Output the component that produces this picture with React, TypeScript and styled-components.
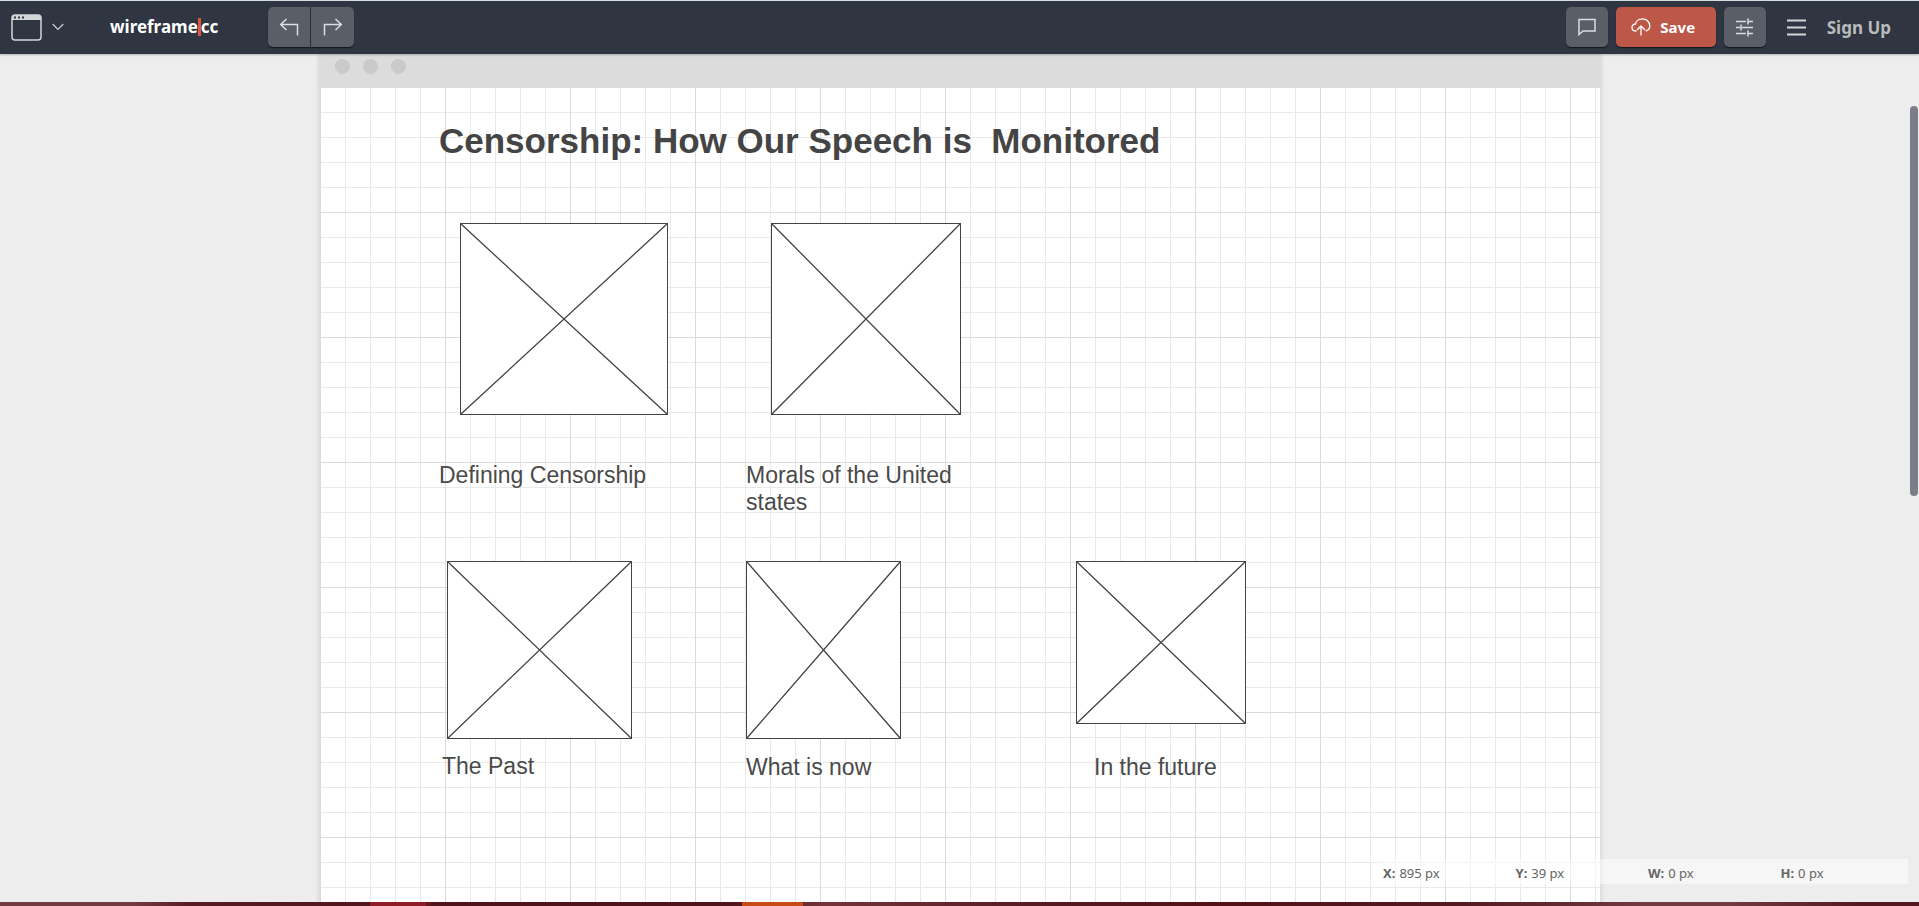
import React from 'react';
import styled, { createGlobalStyle } from 'styled-components';

const GlobalStyle = createGlobalStyle`
  * { box-sizing: border-box; }
  body {
    margin: 0;
    background: #ededed;
    font-family: "Noto Sans", "Open Sans", sans-serif;
  }
  button { font-family: inherit; }
`;

const Screen = styled.div`
  display: flex;
  flex-direction: column;
  height: 100vh;
  overflow: hidden;
`;

const Toolbar = styled.header`
  position: relative;
  z-index: 2;
  flex: none;
  display: flex;
  align-items: flex-start;
  justify-content: space-between;
  height: 54px;
  padding: 6px 28px 0 11px;
  border-top: 1px solid #d5dedf;
  background: #2f3541;
  box-shadow: 0 1px 2px rgba(0, 0, 0, 0.25);
`;

const Group = styled.div<{ $gap: number }>`
  display: flex;
  align-items: center;
  gap: ${(p) => p.$gap}px;
  height: 40px;
`;

const PlainButton = styled.button`
  display: flex;
  align-items: center;
  gap: 10px;
  padding: 0;
  border: 0;
  background: none;
  color: #d3d5d8;
`;

const Logo = styled.a`
  display: flex;
  align-items: center;
  width: 138px;
  color: #fff;
  font-size: 17px;
  font-weight: 700;
  line-height: 24px;
  text-decoration: none;
`;

const LogoBar = styled.span`
  width: 3px;
  height: 18px;
  background: #e2563f;
`;

const ToolButton = styled.button<{ $side?: 'left' | 'right'; $primary?: boolean }>`
  display: flex;
  align-items: center;
  justify-content: center;
  gap: 9px;
  width: ${(p) => (p.$primary ? 100 : p.$side === 'right' ? 43 : 42)}px;
  height: 40px;
  padding: ${(p) => (p.$primary ? '0 5px 0 0' : '0')};
  border: 0;
  border-radius: ${(p) =>
    p.$side === 'left' ? '5px 0 0 5px' : p.$side === 'right' ? '0 5px 5px 0' : '5px'};
  background: ${(p) => (p.$primary ? '#bd5848' : '#5a5e67')};
  box-shadow: 0 1px 1px #14171c;
  color: ${(p) => (p.$primary ? '#fff' : '#dcdde0')};
  font-size: 15px;
  font-weight: 700;
`;

const SignUp = styled.a`
  color: #b9babb;
  font-size: 17px;
  font-weight: 700;
  text-decoration: none;
`;

const Workspace = styled.main`
  position: relative;
  flex: 1;
  display: flex;
  justify-content: center;
  min-height: 0;
  padding-left: 1px;
  overflow: hidden;
`;

const Sheet = styled.section`
  flex: none;
  display: flex;
  flex-direction: column;
  width: 1282px;
  max-width: 100%;
  box-shadow: 0 0 4px rgba(0, 0, 0, 0.14);
`;

const SheetBar = styled.div`
  flex: none;
  display: flex;
  gap: 13px;
  height: 34px;
  padding: 5px 16px;
  background: #dcdcdc;
`;

const Dot = styled.span`
  width: 15px;
  height: 15px;
  border-radius: 50%;
  background: #cacaca;
`;

const Page = styled.div`
  position: relative;
  flex: 1;
  border: solid #dfdfdf;
  border-width: 0 1px;
  background-color: #fff;
  background-image:
    linear-gradient(to left, #dbdbdb 1px, transparent 1px),
    linear-gradient(to top, #dbdbdb 1px, transparent 1px),
    linear-gradient(to left, #e9e9e9 1px, transparent 1px),
    linear-gradient(to top, #e9e9e9 1px, transparent 1px);
  background-size: 125px 125px, 125px 125px, 25px 25px, 25px 25px;
  background-position: 1px 0;
`;

const Placed = styled.div<{ $x: number; $y: number }>`
  position: absolute;
  left: ${(p) => p.$x}px;
  top: ${(p) => p.$y}px;
`;

const Frame = styled.svg`
  display: block;
  background: #fff;
`;

const Heading = styled.h1`
  margin: 0;
  color: #444;
  font: 700 35px/42px "Liberation Sans", Arial, sans-serif;
  white-space: pre;
`;

const Label = styled.p`
  max-width: 230px;
  margin: 0;
  color: #4a4a4a;
  font: 400 23px/27px "Liberation Sans", Arial, sans-serif;
`;

const Scrollbar = styled.div`
  position: absolute;
  top: 52px;
  right: 1px;
  width: 8px;
  height: 390px;
  border-radius: 4px;
  background: #7b7e87;
`;

const Readout = styled.dl`
  position: absolute;
  right: 11px;
  bottom: 18px;
  display: grid;
  grid-template-columns: repeat(4, 1fr);
  width: 530px;
  height: 25px;
  margin: 0;
  background: rgba(255, 255, 255, 0.5);
  color: #666;
  font-size: 13px;
  line-height: 28px;
`;

const Measure = styled.div`
  display: flex;
  gap: 4px;
  padding-left: 5px;
  dt { font-weight: 700; }
  dd { margin: 0; }
`;

const Taskbar = styled.footer`
  flex: none;
  display: flex;
  height: 4px;
  background: linear-gradient(90deg, #733a40 0%, #733a40 7%, #581a22 10%, #4f1319 24%, #4f1319 38%, #733338 43%, #571a22 54%, #521216 63%, #531820 76%, #733a40 86%, #733a40 90%, #531820 97%);
`;

const Task = styled.span<{ $start: number; $width: number; $color: string }>`
  width: ${(p) => p.$width}px;
  margin-left: ${(p) => p.$start}px;
  background: ${(p) => p.$color};
`;

const boxes = [
  { x: 140, y: 135, w: 208, h: 192 },
  { x: 451, y: 135, w: 190, h: 192 },
  { x: 127, y: 473, w: 185, h: 178 },
  { x: 426, y: 473, w: 155, h: 178 },
  { x: 756, y: 473, w: 170, h: 163 },
];

const labels = [
  { x: 119, y: 374, text: 'Defining Censorship' },
  { x: 426, y: 374, text: 'Morals of the United states' },
  { x: 122, y: 665, text: 'The Past' },
  { x: 426, y: 666, text: 'What is now' },
  { x: 774, y: 666, text: 'In the future' },
];

const measures = [
  ['X:', '895 px'],
  ['Y:', '39 px'],
  ['W:', '0 px'],
  ['H:', '0 px'],
];

const stroke = { fill: 'none', stroke: 'currentColor', strokeWidth: 1.5 };

const WindowIcon = () => (
  <svg width="31" height="27" viewBox="0 0 31 27" aria-hidden="true">
    <path d="M4 1h23a3 3 0 0 1 3 3v2H1V4a3 3 0 0 1 3-3z" fill="currentColor" />
    <rect x="1" y="1" width="29" height="25" rx="3" {...stroke} />
    <path d="M3 2.5h2v2H3zM7 2.5h2v2H7zM11 2.5h2v2h-2z" fill="#2f3541" />
  </svg>
);

const ChevronIcon = () => (
  <svg width="12" height="8" viewBox="0 0 12 8" aria-hidden="true">
    <path d="M0.7 1L6 6.5L11.3 1" {...stroke} strokeWidth={1.1} />
  </svg>
);

const TurnIcon = ({ flip }: { flip?: boolean }) => (
  <svg width="20" height="18" viewBox="0 0 20 18" aria-hidden="true">
    <path
      d={flip ? 'M1.5 17.5V6.5H18M12.5 1l5.8 5.5-5.8 5.5' : 'M18.5 17.5V6.5H2M7.5 1L1.7 6.5l5.8 5.5'}
      {...stroke}
    />
  </svg>
);

const CommentIcon = () => (
  <svg width="18" height="18" viewBox="0 0 18 18" aria-hidden="true">
    <path d="M1 1.5h16v11.5H5L1 16.5z" {...stroke} />
  </svg>
);

const CloudIcon = () => (
  <svg width="20" height="18" viewBox="0 0 20 18" aria-hidden="true">
    <path
      d="M5.5 13H4.3A3.5 3.5 0 0 1 1 9.5 3.5 3.5 0 0 1 4.5 6 6 6 0 0 1 10.5 1a7.2 7.2 0 0 1 8.3 7c0 2.5-1.8 4.4-4 5M10 17.5V8.5M6 12l4-4 4 4"
      {...stroke}
      strokeWidth={1.3}
    />
  </svg>
);

const SlidersIcon = () => (
  <svg width="17" height="19" viewBox="0 0 17 19" aria-hidden="true">
    <path
      d="M0 3.5h10M12 3.5h5M12 0.5v6M0 9.5h4M5 6.5v6M6 9.5h11M0 15.5h10M12 12.5v6M12 15.5h5"
      {...stroke}
    />
  </svg>
);

const MenuIcon = () => (
  <svg width="19" height="17" viewBox="0 0 19 17" aria-hidden="true">
    <path d="M0 1.5h19M0 8.5h19M0 15.5h19" {...stroke} strokeWidth={2} />
  </svg>
);

export default function App() {
  return (
    <Screen>
      <GlobalStyle />
      <Toolbar>
        <Group $gap={46}>
          <PlainButton aria-label="Choose canvas type">
            <WindowIcon />
            <ChevronIcon />
          </PlainButton>
          <Group $gap={20}>
            <Logo href="#">
              wireframe
              <LogoBar />
              cc
            </Logo>
            <Group $gap={1}>
              <ToolButton $side="left" aria-label="Undo">
                <TurnIcon />
              </ToolButton>
              <ToolButton $side="right" aria-label="Redo">
                <TurnIcon flip />
              </ToolButton>
            </Group>
          </Group>
        </Group>
        <Group $gap={21}>
          <Group $gap={8}>
            <ToolButton aria-label="Comments">
              <CommentIcon />
            </ToolButton>
            <ToolButton $primary>
              <CloudIcon />
              Save
            </ToolButton>
            <ToolButton aria-label="Settings">
              <SlidersIcon />
            </ToolButton>
          </Group>
          <PlainButton aria-label="Menu">
            <MenuIcon />
          </PlainButton>
          <SignUp href="#">Sign Up</SignUp>
        </Group>
      </Toolbar>
      <Workspace>
        <Sheet>
          <SheetBar>
            <Dot />
            <Dot />
            <Dot />
          </SheetBar>
          <Page>
            <Placed $x={119} $y={32}>
              <Heading>{'Censorship: How Our Speech is  Monitored'}</Heading>
            </Placed>
            {boxes.map((b) => (
              <Placed key={`${b.x}-${b.y}`} $x={b.x} $y={b.y}>
                <Frame width={b.w} height={b.h} aria-hidden="true">
                  <rect x="0.5" y="0.5" width={b.w - 1} height={b.h - 1} fill="#fff" stroke="#444" />
                  <path
                    d={`M1 1L${b.w - 1} ${b.h - 1}M${b.w - 1} 1L1 ${b.h - 1}`}
                    stroke="#444"
                    strokeWidth="1.3"
                  />
                </Frame>
              </Placed>
            ))}
            {labels.map((l) => (
              <Placed key={l.text} $x={l.x} $y={l.y}>
                <Label>{l.text}</Label>
              </Placed>
            ))}
          </Page>
        </Sheet>
        <Scrollbar />
        <Readout>
          {measures.map(([name, value]) => (
            <Measure key={name}>
              <dt>{name}</dt>
              <dd>{value}</dd>
            </Measure>
          ))}
        </Readout>
      </Workspace>
      <Taskbar>
        <Task $start={370} $width={56} $color="#8f1c26" />
        <Task $start={0} $width={5} $color="#64171f" />
        <Task $start={311} $width={61} $color="#c84a17" />
      </Taskbar>
    </Screen>
  );
}
